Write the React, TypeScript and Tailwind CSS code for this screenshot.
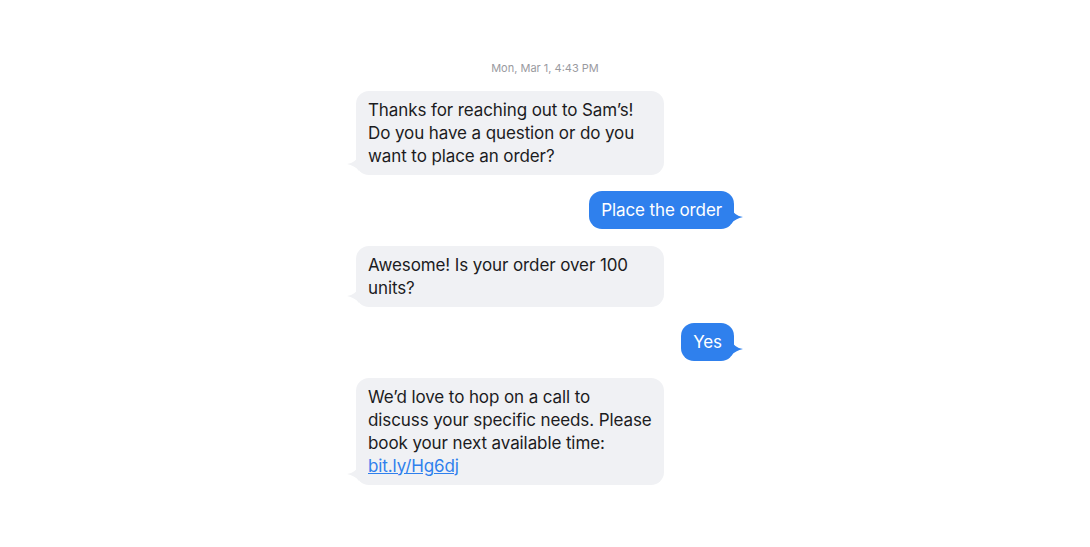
import React from 'react';

interface BubbleProps {
    from: 'them' | 'me';
    className?: string;
    children: React.ReactNode;
}

const Tail: React.FC<{ side: 'left' | 'right' }> = ({ side }) => {
    if (side === 'left') {
        return (
            <svg className="absolute -left-[9px] bottom-[4px]" width="12" height="16" viewBox="0 0 12 16">
                <path d="M12 0 C10 5 6 8 0 9 C5 10 9 12 12 16 Z" fill="#f0f1f4" />
            </svg>
        );
    }
    return (
        <svg className="absolute -right-[9px] bottom-[5px]" width="12" height="16" viewBox="0 0 12 16">
            <path d="M0 0 C2 5 6 8 12 9 C7 10 3 12 0 16 Z" fill="#2f80ed" />
        </svg>
    );
};

const Bubble: React.FC<BubbleProps> = ({ from, className = '', children }) => {
    if (from === 'them') {
        return (
            <div className={`flex justify-start ${className}`}>
                <div className="relative w-[308px] rounded-[13px] bg-[#f0f1f4] px-3 py-[7.5px] text-[17px] leading-[23px] tracking-[-0.1px] text-[#1c1c1e]">
                    <Tail side="left" />
                    {children}
                </div>
            </div>
        );
    }
    return (
        <div className={`flex justify-end ${className}`}>
            <div className="relative rounded-[13px] bg-[#2f80ed] px-3 py-[7.5px] text-[17px] leading-[23px] tracking-[-0.1px] text-white">
                <Tail side="right" />
                {children}
            </div>
        </div>
    );
};

export default function App() {
    return (
        <div className="min-h-screen bg-white font-['Inter','Liberation_Sans',sans-serif]">
            <div className="mx-auto flex w-[378px] flex-col pt-[60px]">
                <p className="mb-[15px] text-center text-[11px] leading-[16px] text-[#9a9a9f]">Mon, Mar 1, 4:43 PM</p>
                <Bubble from="them">
                    Thanks for reaching out to Sam’s!<br />
                    Do you have a question or do you<br />
                    want to place an order?
                </Bubble>
                <Bubble from="me" className="mt-[16px]">Place the order</Bubble>
                <Bubble from="them" className="mt-[17px]">
                    Awesome! Is your order over 100<br />
                    units?
                </Bubble>
                <Bubble from="me" className="mt-[16px]">Yes</Bubble>
                <Bubble from="them" className="mt-[17px]">
                    We’d love to hop on a call to<br />
                    discuss your specific needs. Please<br />
                    book your next available time:<br />
                    <a href="#" className="text-[#2f80ed] underline">bit.ly/Hg6dj</a>
                </Bubble>
            </div>
        </div>
    );
}
